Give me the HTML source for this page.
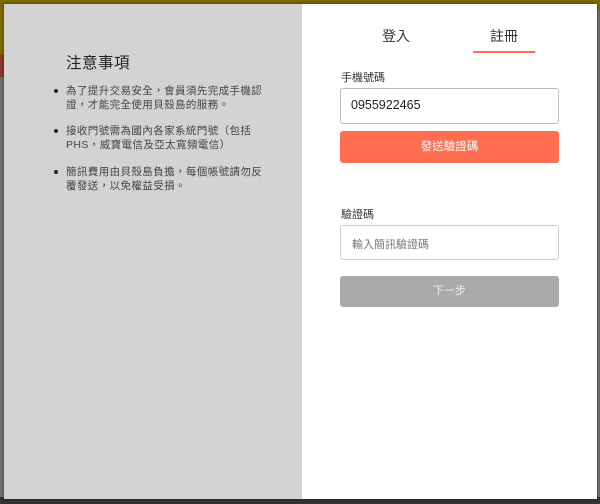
<!DOCTYPE html>
<html><head><meta charset="utf-8"><style>
*{margin:0;padding:0;box-sizing:border-box}
body{width:600px;height:504px;overflow:hidden;background:#6f6f6f;position:relative;font-family:"Liberation Sans","Noto Sans CJK TC",sans-serif}
.a{position:absolute}
</style></head><body>
<div class="a" style="left:0;top:0;width:600px;height:10px;background:#7d6b00"></div>
<div class="a" style="left:0;top:0;width:5px;height:55px;background:#7d6b00"></div>
<div class="a" style="left:0;top:55px;width:5px;height:22px;background:#8a3a2a"></div>
<div class="a" style="left:0;top:497px;width:600px;height:7px;background:#333"></div>
<div class="a" style="left:4px;top:4px;width:593px;height:495px;background:#fff;box-shadow:0 0 3px rgba(0,0,0,.5)"></div>
<div class="a" style="left:4px;top:4px;width:298px;height:495px;background:#d3d3d3"></div>
<div class="a" style="left:66px;top:51px;font-size:15.5px;color:#222;letter-spacing:0.5px">注意事項</div>
<div class="a" style="left:54px;top:84px;width:214px;font-size:10.5px;color:#444;line-height:14px;letter-spacing:0.4px">
<div style="position:relative;padding-left:12px;margin-bottom:12px"><span class="a" style="left:0;top:5px;width:4px;height:4px;border-radius:2px;background:#222"></span>為了提升交易安全，會員須先完成手機認證，才能完全使用貝殼島的服務。</div>
<div style="position:relative;padding-left:12px;margin-bottom:13px"><span class="a" style="left:0;top:5px;width:4px;height:4px;border-radius:2px;background:#222"></span>接收門號需為國內各家系統門號（包括PHS，威寶電信及亞太寬頻電信）</div>
<div style="position:relative;padding-left:12px"><span class="a" style="left:0;top:5px;width:4px;height:4px;border-radius:2px;background:#222"></span>簡訊費用由貝殼島負擔，每個帳號請勿反覆發送，以免權益受損。</div>
</div>
<div class="a" style="left:382px;top:26px;font-size:14px;color:#333">登入</div>
<div class="a" style="left:490px;top:26px;font-size:14px;color:#333">註冊</div>
<div class="a" style="left:473px;top:51px;width:62px;height:2px;background:#ff6e50"></div>
<div class="a" style="left:341px;top:69px;font-size:11px;color:#333">手機號碼</div>
<div class="a" style="left:340px;top:88px;width:219px;height:36px;border:1px solid #bbb;border-radius:3px;font-size:12.5px;color:#222;padding:9px 10px">0955922465</div>
<div class="a" style="left:340px;top:131px;width:219px;height:32px;background:#ff6e50;border-radius:3px;color:#fff;font-size:11.5px;text-align:center;line-height:32px">發送驗證碼</div>
<div class="a" style="left:341px;top:206px;font-size:11px;color:#333">驗證碼</div>
<div class="a" style="left:340px;top:225px;width:219px;height:35px;border:1px solid #ccc;border-radius:3px;font-size:11px;color:#777;padding:10px 11px">輸入簡訊驗證碼</div>
<div class="a" style="left:340px;top:276px;width:219px;height:31px;background:#aaa;border-radius:3px;color:#eee;font-size:11px;text-align:center;line-height:31px">下一步</div>
</body></html>
